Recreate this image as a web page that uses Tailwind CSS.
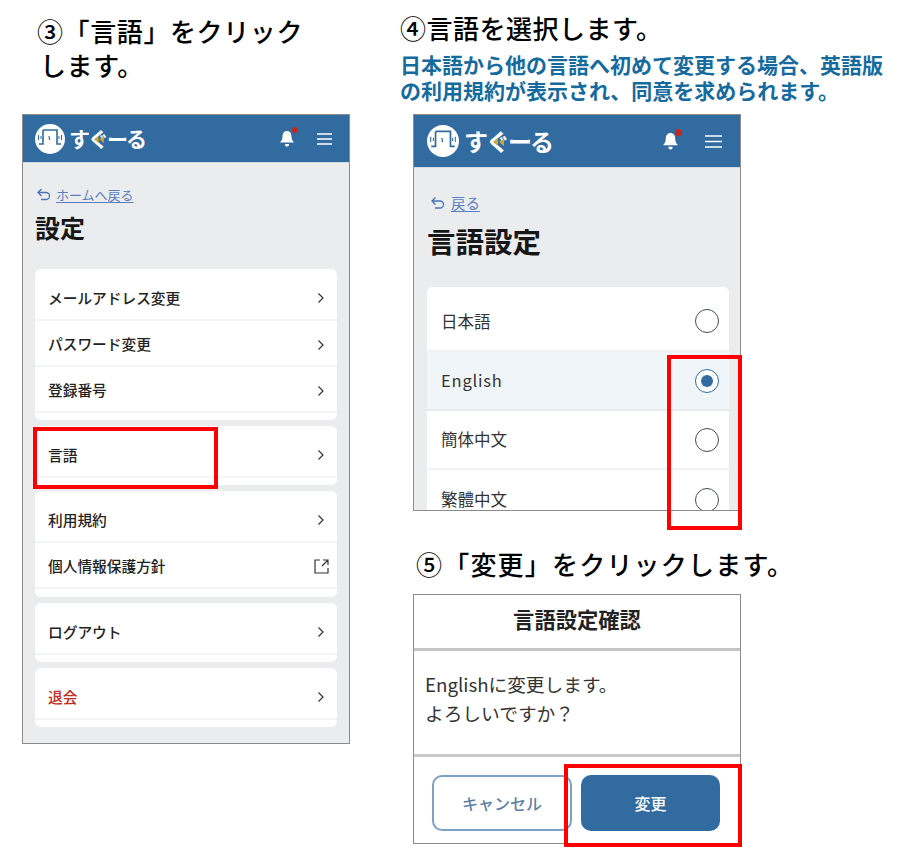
<!DOCTYPE html>
<html lang="ja">
<head>
<meta charset="utf-8">
<script src="https://cdn.jsdelivr.net/npm/@tailwindcss/browser@4"></script>
</head>
<body class="bg-white font-['Noto_Sans_CJK_JP',sans-serif] text-[#1c1c1c]">
<div class="relative w-[898px] h-[863px] overflow-hidden flex">

  <!-- left column -->
  <section class="w-[391px] pl-[22px] shrink-0 pt-[14px]">
    <h2 class="pl-[15px] text-[26px] leading-[34px] font-medium tracking-[0.6px] h-[100px] text-black"><span>③「言語」をクリック</span><br><span class="pl-[3px]">します。</span></h2>
    <div class="w-[328px] h-[630px] border border-[#8c8c8c] bg-[#ebecee] overflow-hidden flex flex-col">
      <header class="h-[48px] shrink-0 bg-[#316b9f] flex items-center pl-[12px] pr-[17px] border-b border-[#cfdde9]">
        <svg width="30" height="30" viewBox="0 0 30 30" class="shrink-0"><circle cx="15" cy="15" r="15" fill="#fff"/><path d="M8 6h14v14h4M8 6v14H4" fill="none" stroke="#316b9f" stroke-width="1.600"/><path d="M14 12l.6 4" stroke="#316b9f" stroke-width="1.200"/><path d="M3.500 11v5M26.500 11v5M6 12v3M24 12v3" stroke="#316b9f" stroke-width="1"/></svg>
        <span class="relative ml-[4px] text-[21px] leading-none font-bold text-white tracking-[-2px]">すぐーる<svg class="absolute left-[25px] top-[8px]" width="11" height="7" viewBox="0 0 12 8"><path d="M0 4l5-4v8zM6 4l5-4v8z" fill="#c9a83c"/></svg></span>
        <span class="relative ml-auto mr-[22px] w-[16px] h-[18px]">
          <svg width="16" height="18" viewBox="0 0 16 18"><path d="M8 1c-3 0-4.500 2.500-4.500 5.500 0 3-1 4.500-2.500 6h14c-1.500-1.500-2.500-3-2.500-6C12.500 3.500 11 1 8 1zM6 14h4a2 2 0 0 1-4 1z" fill="#fff"/></svg>
          <span class="absolute -top-[3px] right-[-3px] w-[6px] h-[6px] rounded-full bg-[#c5281c]"></span>
        </span>
        <svg width="15" height="12" viewBox="0 0 15 12" class="shrink-0"><path d="M0 1h15M0 6h15M0 11h15" stroke="#fff" stroke-width="1.400"/></svg>
      </header>
      <div class="px-[12px] pt-[22px]">
        <a class="flex items-center h-[18px] pl-[2px] text-[13px] leading-none text-[#5b7fc0] underline underline-offset-2">
          <svg width="15" height="13" viewBox="0 0 15 13" class="mr-[4px] shrink-0"><path d="M4.500 1L1 4.500 4.500 8M1 4.500h8a3.500 3.500 0 0 1 0 7H4" fill="none" stroke="#4a73b8" stroke-width="1.300"/></svg>ホームへ戻る</a>
        <h1 class="mt-[7px] text-[25px] leading-[34px] font-bold text-[#161616]">設定</h1>
        <div class="mt-[25px] flex flex-col gap-[6px] text-[14.700px] font-medium text-[#222]">
          <div class="bg-white rounded-[6px] pb-[7px]">
            <div class="h-[52px] pt-[8px] flex items-center justify-between pl-[13px] pr-[12px] border-b-2 border-[#f3f4f5]">メールアドレス変更<svg width="8" height="12" viewBox="0 0 8 12"><path d="M1.500 1.500L6 6l-4.500 4.500" fill="none" stroke="#333" stroke-width="1.200"/></svg></div>
            <div class="h-[46px] pt-[3px] flex items-center justify-between pl-[13px] pr-[12px] border-b-2 border-[#f3f4f5]">パスワード変更<svg width="8" height="12" viewBox="0 0 8 12"><path d="M1.500 1.500L6 6l-4.500 4.500" fill="none" stroke="#333" stroke-width="1.200"/></svg></div>
            <div class="h-[46px] pt-[3px] flex items-center justify-between pl-[13px] pr-[12px] border-b-2 border-[#f3f4f5]">登録番号<svg width="8" height="12" viewBox="0 0 8 12"><path d="M1.500 1.500L6 6l-4.500 4.500" fill="none" stroke="#333" stroke-width="1.200"/></svg></div>
          </div>
          <div class="bg-white rounded-[6px] pb-[7px]">
            <div class="h-[52px] pt-[8px] flex items-center justify-between pl-[13px] pr-[12px] border-b-2 border-[#f3f4f5]">言語<svg width="8" height="12" viewBox="0 0 8 12"><path d="M1.500 1.500L6 6l-4.500 4.500" fill="none" stroke="#333" stroke-width="1.200"/></svg></div>
          </div>
          <div class="bg-white rounded-[6px] pb-[8px]">
            <div class="h-[52px] pt-[8px] flex items-center justify-between pl-[13px] pr-[12px] border-b-2 border-[#f3f4f5]">利用規約<svg width="8" height="12" viewBox="0 0 8 12"><path d="M1.500 1.500L6 6l-4.500 4.500" fill="none" stroke="#333" stroke-width="1.200"/></svg></div>
            <div class="h-[46px] pt-[3px] flex items-center justify-between pl-[13px] pr-[8px] border-b-2 border-[#f3f4f5]">個人情報保護方針<svg width="15" height="15" viewBox="0 0 15 15"><path d="M6 1H1v13h13V9M8 7l6-6M9 1h5v5" fill="none" stroke="#333" stroke-width="1.200"/></svg></div>
          </div>
          <div class="bg-white rounded-[6px] pb-[7px]">
            <div class="h-[52px] pt-[8px] flex items-center justify-between pl-[13px] pr-[12px] border-b-2 border-[#f3f4f5]">ログアウト<svg width="8" height="12" viewBox="0 0 8 12"><path d="M1.500 1.500L6 6l-4.500 4.500" fill="none" stroke="#333" stroke-width="1.200"/></svg></div>
          </div>
          <div class="bg-white rounded-[6px] pb-[7px]">
            <div class="h-[52px] pt-[8px] flex items-center justify-between pl-[13px] pr-[12px] border-b-2 border-[#f3f4f5] text-[#c5281c]">退会<svg width="8" height="12" viewBox="0 0 8 12"><path d="M1.500 1.500L6 6l-4.500 4.500" fill="none" stroke="#333" stroke-width="1.200"/></svg></div>
          </div>
        </div>
      </div>
    </div>
  </section>

  <!-- right column -->
  <section class="flex-1 pt-[14px]">
    <h2 class="pl-[9px] text-[26px] leading-[28px] font-medium tracking-[0.5px] text-black">④言語を選択します。</h2>
    <p class="pl-[9px] mt-[9px] h-[63px] leading-[26px] font-bold text-[#156a9e] text-[21px]">日本語から他の言語へ初めて変更する場合、英語版<br>の利用規約が表示され、同意を求められます。</p>

    <div class="ml-[22px] w-[328px] h-[397px] border border-[#8c8c8c] bg-[#ebecee] overflow-hidden flex flex-col">
      <header class="h-[53px] shrink-0 bg-[#316b9f] flex items-center pl-[13px] pr-[18px] border-b border-[#cfdde9]">
        <svg width="32" height="32" viewBox="0 0 30 30" class="shrink-0"><circle cx="15" cy="15" r="15" fill="#fff"/><path d="M8 6h14v14h4M8 6v14H4" fill="none" stroke="#316b9f" stroke-width="1.600"/><path d="M14 12l.6 4" stroke="#316b9f" stroke-width="1.200"/><path d="M3.500 11v5M26.500 11v5M6 12v3M24 12v3" stroke="#316b9f" stroke-width="1"/></svg>
        <span class="relative ml-[5px] text-[24px] leading-none font-bold text-white tracking-[-2px]">すぐーる<svg class="absolute left-[29px] top-[9px]" width="12" height="8" viewBox="0 0 12 8"><path d="M0 4l5-4v8zM6 4l5-4v8z" fill="#c9a83c"/></svg></span>
        <span class="relative ml-auto mr-[26px] w-[17px] h-[19px]">
          <svg width="17" height="19" viewBox="0 0 16 18"><path d="M8 1c-3 0-4.500 2.500-4.500 5.500 0 3-1 4.500-2.500 6h14c-1.500-1.500-2.500-3-2.500-6C12.500 3.500 11 1 8 1zM6 14h4a2 2 0 0 1-4 1z" fill="#fff"/></svg>
          <span class="absolute -top-[3px] right-[-3px] w-[7px] h-[7px] rounded-full bg-[#c5281c]"></span>
        </span>
        <svg width="17" height="13" viewBox="0 0 17 13" class="shrink-0"><path d="M0 1h17M0 6.500h17M0 12h17" stroke="#fff" stroke-width="1.400"/></svg>
      </header>
      <div class="pl-[13px] pr-[11px] pt-[26px]">
        <a class="flex items-center h-[18px] pl-[4px] text-[14.500px] leading-none text-[#5b7fc0] underline underline-offset-2">
          <svg width="15" height="14" viewBox="0 0 15 13" class="mr-[5px] shrink-0"><path d="M4.500 1L1 4.500 4.500 8M1 4.500h8a3.500 3.500 0 0 1 0 7H4" fill="none" stroke="#4a73b8" stroke-width="1.300"/></svg>戻る</a>
        <h1 class="mt-[9px] text-[28.500px] leading-[40px] font-bold text-[#161616]">言語設定</h1>
        <div class="mt-[26px] bg-white rounded-t-[6px] text-[16.500px] text-[#333]">
          <div class="h-[65px] pt-[5px] pl-[14px] pr-[10px] flex items-center justify-between border-b-2 border-[#f1f2f3]">日本語<span class="w-[24px] h-[24px] rounded-full border-[1.500px] border-[#444b55] bg-white"></span></div>
          <div class="h-[59px] pl-[14px] pr-[10px] flex items-center justify-between border-b-2 border-[#e9ecef] bg-[#f0f5f9] tracking-[0.800px]">English<span class="w-[24px] h-[24px] rounded-full border-[1.500px] border-[#316b9f] bg-white flex items-center justify-center"><span class="w-[12px] h-[12px] rounded-full bg-[#316b9f]"></span></span></div>
          <div class="h-[59px] pl-[14px] pr-[10px] flex items-center justify-between border-b-2 border-[#f1f2f3]">簡体中文<span class="w-[24px] h-[24px] rounded-full border-[1.500px] border-[#444b55] bg-white"></span></div>
          <div class="h-[59px] pl-[14px] pr-[10px] flex items-center justify-between">繁體中文<span class="w-[24px] h-[24px] rounded-full border-[1.500px] border-[#444b55] bg-white"></span></div>
        </div>
      </div>
    </div>

    <h2 class="pl-[25px] mt-[33px] h-[50px] text-[26px] leading-[40px] font-medium tracking-[1.200px] text-black">⑤「変更」をクリックします。</h2>

    <div class="ml-[22px] w-[328px] h-[250px] border border-[#8c8c8c] bg-white flex flex-col">
      <div class="h-[56px] shrink-0 pb-[5px] flex items-center justify-center text-[21.300px] font-bold text-[#222] border-b-[3px] border-[#c4c4c4]">言語設定確認</div>
      <div class="h-[106px] shrink-0 px-[11px] pt-[18px] text-[18.700px] leading-[29px] text-[#333] border-b-[3px] border-[#c9c9c9]">Englishに変更します。<br>よろしいですか？</div>
      <div class="flex-1 pl-[18px] pr-[20px] pt-[18px] flex gap-[9px]">
        <button class="w-[140px] h-[56px] rounded-[10px] border-2 border-[#7ea0c2] text-[#5f7fa5] text-[16px] font-medium">キャンセル</button>
        <button class="w-[139px] h-[56px] rounded-[10px] bg-[#316b9f] text-white text-[16px] font-medium">変更</button>
      </div>
    </div>
  </section>

  <!-- red callouts -->
  <div class="absolute left-[33px] top-[427px] w-[185px] h-[62px] border-[4px] border-[#ff0000]"></div>
  <div class="absolute left-[667px] top-[355px] w-[75px] h-[175px] border-[4px] border-[#ff0000]"></div>
  <div class="absolute left-[564px] top-[764px] w-[178px] h-[83px] border-[4px] border-[#ff0000]"></div>
</div>
</body>
</html>
